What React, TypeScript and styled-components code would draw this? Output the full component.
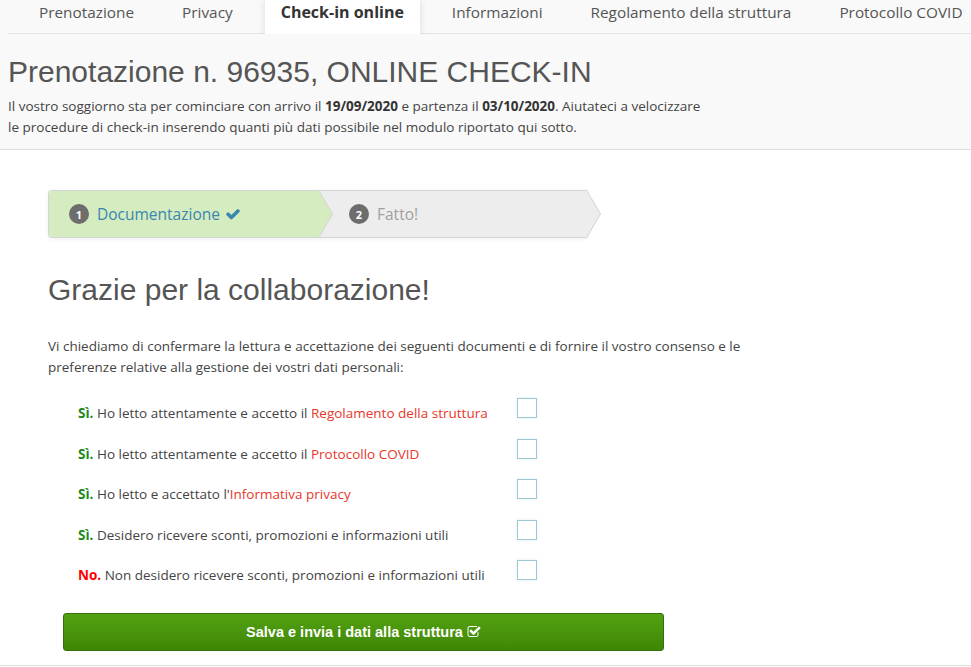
import React from "react";
import styled, { createGlobalStyle } from "styled-components";

const GlobalStyle = createGlobalStyle`
  html, body {
    margin: 0;
    padding: 0;
    background: #ffffff;
    overflow: hidden;
  }
  body {
    font-family: "Open Sans", "DejaVu Sans", sans-serif;
    color: #444;
  }
  * { box-sizing: border-box; }
`;

const Page = styled.div`
  width: 971px;
  min-height: 667px;
`;

const Header = styled.header`
  background: #f9f9f9;
  border-bottom: 1px solid #dcdcdc;
  padding: 0 0 12px 8px;
`;

const Tabs = styled.nav`
  display: flex;
  gap: 16px;
  padding-left: 15px;
  border-bottom: 1px solid #e2e2e2;
  white-space: nowrap;
`;

const Tab = styled.a<{ $active?: boolean }>`
  display: block;
  flex: none;
  padding: 1px 16px 10px;
  line-height: 22px;
  font-size: ${(p) => (p.$active ? "16px" : "15.35px")};
  text-decoration: none;
  color: ${(p) => (p.$active ? "#333" : "#555")};
  font-weight: ${(p) => (p.$active ? 700 : 400)};
  background: ${(p) => (p.$active ? "#ffffff" : "transparent")};
  position: relative;
  z-index: ${(p) => (p.$active ? 1 : 0)};
  margin-bottom: ${(p) => (p.$active ? "-1px" : "0")};
  padding-bottom: ${(p) => (p.$active ? "11px" : "10px")};
  box-shadow: ${(p) => (p.$active ? "0 0 7px rgba(0,0,0,0.13)" : "none")};
  clip-path: ${(p) => (p.$active ? "inset(-10px -10px 0 -10px)" : "none")};
`;

const Title = styled.h1`
  margin: 21px 0 0;
  font-family: "Liberation Sans", Arial, sans-serif;
  font-weight: 400;
  font-size: 30px;
  line-height: 33px;
  color: #555;
`;

const Intro = styled.p`
  margin: 8px 0 0;
  font-size: 13.5px;
  line-height: 20.5px;
  color: #444;

  b { color: #333; font-weight: 700; }
`;

const Main = styled.main`
  padding: 40px 0 14px 48px;
`;

const Wizard = styled.div`
  display: grid;
  grid-template-columns: 270px 268px;
  width: 539px;
  height: 48px;
  border: 1px solid #d4d4d4;
  border-right: none;
  border-radius: 4px 0 0 4px;
  box-shadow: 0 1px 4px rgba(0, 0, 0, 0.065);
`;

const Step = styled.div<{ $complete?: boolean; $first?: boolean }>`
  position: relative;
  display: flex;
  align-items: center;
  height: 46px;
  padding: 0 20px 0 ${(p) => (p.$first ? "20px" : "30px")};
  font-size: 15.5px;
  color: ${(p) => (p.$complete ? "#3a87ad" : "#a0a0a0")};
  background: ${(p) => (p.$complete ? "#d5ecc0" : "#ededed")};
  border-radius: ${(p) => (p.$first ? "4px 0 0 4px" : "0")};
`;

const Chevron = styled.span<{ $bg: string }>`
  position: absolute;
  top: -1px;
  right: -14px;
  z-index: 1;
  display: block;
  border: 24px solid transparent;
  border-right: 0;
  border-left: 14px solid #d4d4d4;

  &::before {
    content: "";
    position: absolute;
    top: -24px;
    right: 1px;
    display: block;
    border: 24px solid transparent;
    border-right: 0;
    border-left: 14px solid ${(p) => p.$bg};
  }
`;

const Badge = styled.span`
  display: inline-flex;
  align-items: center;
  justify-content: center;
  width: 20px;
  height: 20px;
  border-radius: 50%;
  background: #6d6d6d;
  color: #fff;
  font-size: 11px;
  font-weight: 700;
  margin-right: 8px;
  flex: none;
`;

const CheckIcon = styled.svg`
  width: 16px;
  height: 16px;
  margin-left: 5px;
  fill: #3a87ad;
`;

const Heading = styled.h2`
  margin: 35px 0 0;
  font-family: "Liberation Sans", Arial, sans-serif;
  font-weight: 400;
  font-size: 30px;
  line-height: 33px;
  color: #555;
`;

const Lead = styled.p`
  margin: 30px 0 0;
  font-size: 13.5px;
  line-height: 21px;
  color: #444;
`;

const Consents = styled.div`
  margin: 20px 0 0 30px;
  display: flex;
  flex-direction: column;
  gap: 20.5px;
`;

const ConsentRow = styled.label`
  display: grid;
  grid-template-columns: 439px 20px;
  align-items: start;
  height: 20px;
  font-size: 13.5px;
  line-height: 20px;
  color: #444;
`;

const ConsentText = styled.span`
  padding-top: 5px;
  white-space: nowrap;
`;

const Answer = styled.b<{ $yes: boolean }>`
  font-weight: 700;
  color: ${(p) => (p.$yes ? "#1f8a1a" : "#ff0000")};
`;

const DocLink = styled.a`
  color: #e8362b;
  text-decoration: none;
`;

const Checkbox = styled.span`
  display: block;
  width: 20px;
  height: 20px;
  border: 1.5px solid #9fc8d4;
  background: #fff;
  box-shadow: 0 0 3px rgba(159, 200, 212, 0.35);
`;

const SubmitButton = styled.button`
  display: flex;
  align-items: center;
  justify-content: center;
  gap: 4px;
  margin: 33px 0 0 15px;
  width: 601px;
  height: 38px;
  border: 1px solid #356f0c;
  border-radius: 3px;
  background: linear-gradient(to bottom, #52a112, #3f8706);
  color: #fff;
  font-family: "Liberation Sans", Arial, sans-serif;
  font-weight: 700;
  font-size: 14.5px;
  cursor: pointer;
`;

const ButtonIcon = styled.svg`
  width: 14px;
  height: 14px;
  fill: #fff;
`;

const Footer = styled.footer`
  border-top: 1px solid #dedede;
  height: 20px;
`;

const consents: { yes: boolean; before: string; link?: string }[] = [
  { yes: true, before: "Ho letto attentamente e accetto il ", link: "Regolamento della struttura" },
  { yes: true, before: "Ho letto attentamente e accetto il ", link: "Protocollo COVID" },
  { yes: true, before: "Ho letto e accettato l'", link: "Informativa privacy" },
  { yes: true, before: "Desidero ricevere sconti, promozioni e informazioni utili" },
  { yes: false, before: "Non desidero ricevere sconti, promozioni e informazioni utili" },
];

const tabs = [
  "Prenotazione",
  "Privacy",
  "Check-in online",
  "Informazioni",
  "Regolamento della struttura",
  "Protocollo COVID",
];

export default function App() {
  return (
    <Page>
      <GlobalStyle />
      <Header>
        <Tabs>
          {tabs.map((t) => (
            <Tab key={t} $active={t === "Check-in online"}>
              {t}
            </Tab>
          ))}
        </Tabs>
        <Title>Prenotazione n. 96935, ONLINE CHECK-IN</Title>
        <Intro>
          Il vostro soggiorno sta per cominciare con arrivo il <b>19/09/2020</b> e partenza il{" "}
          <b>03/10/2020</b>. Aiutateci a velocizzare
          <br />
          le procedure di check-in inserendo quanti più dati possibile nel modulo riportato qui sotto.
        </Intro>
      </Header>
      <Main>
        <Wizard>
          <Step $complete $first>
            <Badge>1</Badge>
            Documentazione
            <CheckIcon viewBox="0 0 1792 1792">
              <path d="M1671 566q0 40-28 68l-724 724-136 136q-28 28-68 28t-68-28l-136-136-362-362q-28-28-28-68t28-68l136-136q28-28 68-28t68 28l294 295 656-657q28-28 68-28t68 28l136 136q28 28 28 68z" />
            </CheckIcon>
            <Chevron $bg="#d5ecc0" />
          </Step>
          <Step>
            <Badge>2</Badge>
            Fatto!
            <Chevron $bg="#ededed" />
          </Step>
        </Wizard>
        <Heading>Grazie per la collaborazione!</Heading>
        <Lead>
          Vi chiediamo di confermare la lettura e accettazione dei seguenti documenti e di fornire il vostro consenso e le
          <br />
          preferenze relative alla gestione dei vostri dati personali:
        </Lead>
        <Consents>
          {consents.map((c, i) => (
            <ConsentRow key={i}>
              <ConsentText>
                <Answer $yes={c.yes}>{c.yes ? "Sì." : "No."}</Answer> {c.before}
                {c.link && <DocLink>{c.link}</DocLink>}
              </ConsentText>
              <Checkbox />
            </ConsentRow>
          ))}
        </Consents>
        <SubmitButton>
          Salva e invia i dati alla struttura
          <ButtonIcon viewBox="0 0 1792 1792">
            <path d="M1472 930v318q0 119-84.5 203.5t-203.5 84.5h-832q-119 0-203.5-84.5t-84.5-203.5v-832q0-119 84.5-203.5t203.5-84.5h832q63 0 117 25 15 7 18 23 3 17-9 29l-49 49q-10 10-23 10-3 0-9-2-23-6-45-6h-832q-66 0-113 47t-47 113v832q0 66 47 113t113 47h832q66 0 113-47t47-113v-254q0-13 9-22l64-64q10-10 23-10 6 0 12 3 20 8 20 29zm231-489l-814 814q-24 24-57 24t-57-24l-430-430q-24-24-24-57t24-57l110-110q24-24 57-24t57 24l263 263 647-647q24-24 57-24t57 24l110 110q24 24 24 57t-24 57z" />
          </ButtonIcon>
        </SubmitButton>
      </Main>
      <Footer />
    </Page>
  );
}
